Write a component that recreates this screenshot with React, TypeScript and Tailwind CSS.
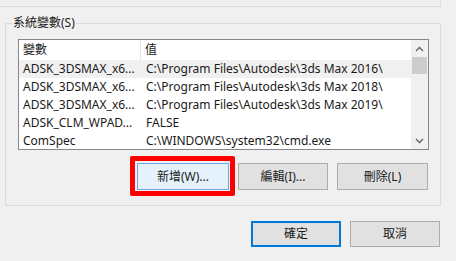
import React from "react";

const rows: [string, string][] = [
  ["ADSK_3DSMAX_x6...", "C:\\Program Files\\Autodesk\\3ds Max 2016\\"],
  ["ADSK_3DSMAX_x6...", "C:\\Program Files\\Autodesk\\3ds Max 2018\\"],
  ["ADSK_3DSMAX_x6...", "C:\\Program Files\\Autodesk\\3ds Max 2019\\"],
  ["ADSK_CLM_WPAD...", "FALSE"],
  ["ComSpec", "C:\\WINDOWS\\system32\\cmd.exe"],
];

const font = {
  fontFamily: '"Segoe UI", "Noto Sans", "Noto Sans CJK TC", sans-serif',
};

export default function App() {
  return (
    <div
      className="w-[456px] h-[261px] bg-[#f0f0f0] text-[12px] text-[#1a1a1a] overflow-hidden flex flex-col"
      style={font}
    >
      {/* previous group box bottom */}
      <div className="w-[441px] h-[7px] border-b border-r border-[#dcdcdc] shrink-0" />

      {/* system variables group */}
      <div className="relative ml-[5px] mt-[16px] w-[436px] h-[183px] border border-[#dcdcdc] flex flex-col">
        <div className="absolute left-[6px] top-[-10px] px-[1px] bg-[#f0f0f0] leading-[18px]">
          系統變數(S)
        </div>
        <div className="ml-[12px] mt-[15px] w-[411px] h-[111px] border border-[#828790] bg-white flex">
          <div className="flex-1 flex flex-col">
            <div className="h-[20px] flex items-center shrink-0">
              <div className="w-[122px] h-full pl-[4px] flex items-center border-r border-[#e5e5e5]">
                變數
              </div>
              <div className="pl-[4px]">值</div>
            </div>
            {rows.map(([n, v], i) => (
              <div
                key={i}
                className={`h-[18px] flex items-center ${i === 0 ? "bg-[#f0f0f0]" : ""}`}
              >
                <div className="w-[122px] pl-[4px] whitespace-nowrap">{n}</div>
                <div className="pl-[5px] whitespace-nowrap">{v}</div>
              </div>
            ))}
          </div>
          <div className="w-[17px] bg-[#f0f0f0] flex flex-col items-center">
            <div className="h-[17px] w-full flex items-center justify-center">
              <svg width="9" height="6" viewBox="0 0 9 6">
                <path d="M1 5 L4.5 1.5 L8 5" fill="none" stroke="#606060" strokeWidth="1.3" />
              </svg>
            </div>
            <div className="w-[15px] h-[17px] bg-[#cdcdcd]" />
            <div className="flex-1" />
            <div className="h-[17px] w-full flex items-center justify-center">
              <svg width="9" height="6" viewBox="0 0 9 6">
                <path d="M1 1 L4.5 4.5 L8 1" fill="none" stroke="#606060" strokeWidth="1.3" />
              </svg>
            </div>
          </div>
        </div>
        <div className="flex justify-end gap-[9px] mr-[12px] mt-[13px]">
          <div className="relative">
            <div className="absolute -left-[7px] -top-[7px] -right-[6px] -bottom-[6px] border-[5px] border-[#ff0000] rounded-[2px]" />
            <button className="relative w-[92px] h-[27px] bg-[#e5f1fb] border border-[#6aa9e6] flex items-center justify-center">
              新增(W)...
            </button>
          </div>
          <button className="w-[90px] h-[27px] bg-[#e1e1e1] border border-[#adadad] flex items-center justify-center">
            編輯(I)...
          </button>
          <button className="w-[91px] h-[27px] bg-[#e1e1e1] border border-[#adadad] flex items-center justify-center">
            刪除(L)
          </button>
        </div>
      </div>

      <div className="flex justify-end gap-[9px] mr-[16px] mt-[15px]">
        <button className="w-[90px] h-[26px] bg-[#e1e1e1] border-2 border-[#0078d7] flex items-center justify-center">
          確定
        </button>
        <button className="w-[90px] h-[26px] bg-[#e1e1e1] border border-[#adadad] flex items-center justify-center">
          取消
        </button>
      </div>
    </div>
  );
}
